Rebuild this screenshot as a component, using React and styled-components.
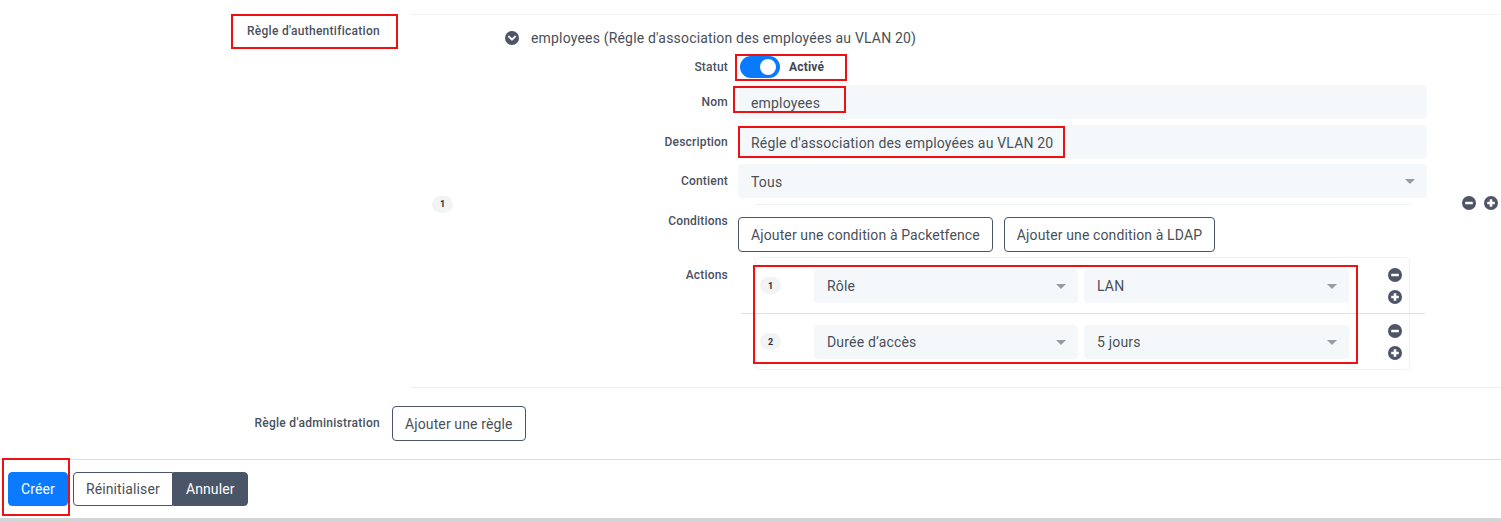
import React from "react";
import styled, { createGlobalStyle } from "styled-components";

const GlobalStyle = createGlobalStyle`
  html, body { margin: 0; padding: 0; background: #ffffff; }
  body { font-family: Roboto, "Noto Sans", "Liberation Sans", sans-serif; color: #495057; letter-spacing: 0.18px; }
  * { box-sizing: border-box; }
  button { letter-spacing: 0.12px; }
`;

const Page = styled.div`
  width: 1501px;
  min-height: 522px;
  padding-top: 14px;
  display: flex;
  flex-direction: column;
`;

const FormRow = styled.div`
  display: flex;
  align-items: flex-start;
  margin-top: ${(p) => p.$mt || 0}px;
`;

const LabelCol = styled.div`
  width: 392px;
  flex: none;
  text-align: right;
  padding-right: 12px;
  padding-top: 6px;
`;

const SectionLabel = styled.span`
  position: relative;
  display: inline-block;
  font-size: 12px;
  line-height: 14px;
  font-weight: 500;
  letter-spacing: 0.28px;
  color: #4a5160;
`;

const Annot = styled.span`
  position: absolute;
  top: ${(p) => p.$t}px;
  left: ${(p) => p.$l}px;
  width: ${(p) => (p.$w != null ? `${p.$w}px` : "auto")};
  height: ${(p) => (p.$h != null ? `${p.$h}px` : "auto")};
  right: ${(p) => (p.$r != null ? `${p.$r}px` : "auto")};
  bottom: ${(p) => (p.$b != null ? `${p.$b}px` : "auto")};
  border: 2px solid #ee1111;
  pointer-events: none;
  z-index: 5;
`;

const ContentCol = styled.div`
  flex: 1;
  min-width: 0;
`;

const RuleCard = styled.div`
  margin-left: 18px;
  border-top: 1px solid #f1f2f4;
  border-bottom: 1px solid #eff0f2;
  display: flex;
  align-items: center;
`;

const BadgeCell = styled.div`
  width: 80px;
  flex: none;
  padding-left: 22px;
  margin-top: 3px;
`;

const Badge = styled.span`
  display: inline-flex;
  align-items: center;
  justify-content: center;
  width: 21px;
  height: 17px;
  border-radius: 9px;
  background: #f1f3f5;
  color: #2b2f36;
  font-size: 9px;
  font-weight: 700;
  letter-spacing: 0;
`;

const RuleMain = styled.div`
  flex: 1;
  min-width: 0;
  padding: 11px 13px 17px 0;
`;

const RuleHeader = styled.div`
  display: flex;
  align-items: center;
  gap: 12px;
  height: 24px;
  padding-left: 15px;
  font-size: 14px;
  color: #495057;
`;

const Field = styled.div`
  display: grid;
  grid-template-columns: 238px 1fr;
  column-gap: 10px;
  margin-top: ${(p) => p.$mt || 0}px;
`;

const FieldLabel = styled.div`
  text-align: right;
  font-size: 12px;
  line-height: 14px;
  font-weight: 500;
  letter-spacing: 0.2px;
  color: #4a5160;
  padding-top: ${(p) => (p.$pt != null ? p.$pt : 10)}px;
`;

const FieldBody = styled.div`
  position: relative;
  min-width: 0;
`;

const SwitchRow = styled.div`
  position: relative;
  height: 26px;
  display: flex;
  align-items: center;
  gap: 9px;
  padding-left: 2px;
`;

const SwitchTrack = styled.span`
  width: 40px;
  height: 22px;
  border-radius: 11px;
  background: #0a7bff;
  position: relative;
  display: inline-block;
`;

const SwitchKnob = styled.span`
  position: absolute;
  top: 3px;
  right: 4px;
  width: 16px;
  height: 16px;
  border-radius: 50%;
  background: #ffffff;
`;

const SwitchText = styled.span`
  font-size: 12px;
  font-weight: 700;
  color: #3f4654;
`;

const Input = styled.div`
  position: relative;
  height: 34px;
  border-radius: 4px;
  background: #f5f8fb;
  display: flex;
  align-items: center;
  padding: 1px 12px 0 13px;
  font-size: 14px;
  color: #495057;
  white-space: nowrap;
`;

const SelectText = styled.span`
  flex: 1;
`;

const Caret = () => (
  <svg width="10" height="5" viewBox="0 0 10 5">
    <path d="M0 0 L10 0 L5 5 Z" fill="#9b9b9b" />
  </svg>
);

const Select = ({ children }) => (
  <Input>
    <SelectText>{children}</SelectText>
    <Caret />
  </Input>
);

const EmptyList = styled.div`
  margin: 0 17px;
  border-top: 1px solid #eef1f5;
`;

const ButtonBar = styled.div`
  display: flex;
  gap: 11px;
  margin-top: 12px;
`;

const OutlineButton = styled.button`
  height: 35px;
  padding: 0 12px;
  border: 1px solid #4a5568;
  border-radius: ${(p) => p.$radius || "4px"};
  background: #ffffff;
  color: #495057;
  font-family: inherit;
  font-size: 14px;
  cursor: pointer;
  white-space: nowrap;
`;

const ActionsCard = styled.div`
  position: relative;
  margin: 0 17px;
  border: 1px solid #eff1f4;
  border-radius: 4px;
`;

const ActionRow = styled.div`
  height: 55px;
  display: flex;
  align-items: center;
  padding-left: 4px;
`;

const RowDivider = styled.div`
  height: 1px;
  background: #dde0e5;
  margin: 0 -16px 0 -15px;
`;

const ActionBadgeCell = styled.div`
  width: 54px;
  flex: none;
  display: flex;
  align-items: center;
`;

const SelectPair = styled.div`
  flex: 1;
  display: grid;
  grid-template-columns: 264fr 265fr;
  gap: 6px;
`;

const IconStack = styled.div`
  width: 60px;
  flex: none;
  display: flex;
  flex-direction: column;
  align-items: flex-end;
  gap: 8px;
  padding-right: 7px;
`;

const IconRow = styled.div`
  width: 61px;
  flex: none;
  display: flex;
  gap: 8px;
  padding-left: 22px;
  margin-top: 3px;
`;

const IconBtn = styled.span`
  display: inline-flex;
  width: 14px;
  height: 14px;
`;

const ICON = "#4d5567";

const MinusCircle = () => (
  <IconBtn>
    <svg width="14" height="14" viewBox="0 0 14 14">
      <circle cx="7" cy="7" r="7" fill={ICON} />
      <rect x="3.2" y="5.7" width="7.6" height="2.6" rx="0.4" fill="#fff" />
    </svg>
  </IconBtn>
);

const PlusCircle = () => (
  <IconBtn>
    <svg width="14" height="14" viewBox="0 0 14 14">
      <circle cx="7" cy="7" r="7" fill={ICON} />
      <rect x="3.2" y="5.7" width="7.6" height="2.6" rx="0.4" fill="#fff" />
      <rect x="5.7" y="3.2" width="2.6" height="7.6" rx="0.4" fill="#fff" />
    </svg>
  </IconBtn>
);

const ChevronCircle = () => (
  <IconBtn>
    <svg width="14" height="14" viewBox="0 0 14 14">
      <circle cx="7" cy="7" r="7" fill={ICON} />
      <path d="M3.9 5.6 L7 8.6 L10.1 5.6" stroke="#fff" strokeWidth="2" fill="none" strokeLinecap="round" strokeLinejoin="round" />
    </svg>
  </IconBtn>
);

const Footer = styled.div`
  position: relative;
  margin-top: 18px;
  border-top: 1px solid #dcdcdc;
  padding: 12px 8px 12px;
  display: flex;
  gap: 5px;
`;

const PrimaryButton = styled.button`
  height: 34px;
  padding: 0 12px;
  border: 1px solid #0a7bff;
  border-radius: 4px;
  background: #0a7bff;
  color: #ffffff;
  font-family: inherit;
  font-size: 14px;
`;

const ButtonGroup = styled.div`
  display: flex;
`;

const DarkButton = styled.button`
  height: 34px;
  padding: 0 12px;
  border: 1px solid #4a5568;
  border-radius: 0 4px 4px 0;
  background: #4a5568;
  color: #ffffff;
  font-family: inherit;
  font-size: 14px;
`;

const GroupOutline = styled(OutlineButton)`
  height: 34px;
`;

const BottomBand = styled.div`
  height: 4px;
  background: #d2d6d9;
`;

const actions = [
  { n: 1, type: "Rôle", value: "LAN" },
  { n: 2, type: "Durée d’accès", value: "5 jours" },
];

export default function App() {
  return (
    <>
      <GlobalStyle />
      <Page>
        <FormRow>
          <LabelCol>
            <SectionLabel>
              Règle d'authentification
              <Annot $t={-10} $l={-16} $r={-18} $b={-11} />
            </SectionLabel>
          </LabelCol>
          <ContentCol>
            <RuleCard>
              <BadgeCell>
                <Badge>1</Badge>
              </BadgeCell>
              <RuleMain>
                <RuleHeader>
                  <ChevronCircle />
                  <span>employees (Régle d'association des employées au VLAN 20)</span>
                </RuleHeader>

                <Field $mt={4}>
                  <FieldLabel $pt={6}>Statut</FieldLabel>
                  <FieldBody>
                    <SwitchRow>
                      <SwitchTrack>
                        <SwitchKnob />
                      </SwitchTrack>
                      <SwitchText>Activé</SwitchText>
                      <Annot $t={0} $l={-3} $w={112} $h={27} />
                    </SwitchRow>
                  </FieldBody>
                </Field>

                <Field $mt={5}>
                  <FieldLabel>Nom</FieldLabel>
                  <FieldBody>
                    <Input>employees</Input>
                    <Annot $t={1} $l={-5} $w={113} $h={27} />
                  </FieldBody>
                </Field>

                <Field $mt={6}>
                  <FieldLabel>Description</FieldLabel>
                  <FieldBody>
                    <Input>Régle d'association des employées au VLAN 20</Input>
                    <Annot $t={1} $l={0} $w={327} $h={32} />
                  </FieldBody>
                </Field>

                <Field $mt={5}>
                  <FieldLabel>Contient</FieldLabel>
                  <FieldBody>
                    <Select>Tous</Select>
                  </FieldBody>
                </Field>

                <Field $mt={6}>
                  <FieldLabel $pt={10}>Conditions</FieldLabel>
                  <FieldBody>
                    <EmptyList />
                    <ButtonBar>
                      <OutlineButton>Ajouter une condition à Packetfence</OutlineButton>
                      <OutlineButton>Ajouter une condition à LDAP</OutlineButton>
                    </ButtonBar>
                  </FieldBody>
                </Field>

                <Field $mt={5}>
                  <FieldLabel $pt={11}>Actions</FieldLabel>
                  <FieldBody>
                    <ActionsCard>
                      {actions.map((a, i) => (
                        <React.Fragment key={a.n}>
                          {i > 0 && <RowDivider />}
                          <ActionRow>
                            <ActionBadgeCell>
                              <Badge>{a.n}</Badge>
                            </ActionBadgeCell>
                            <SelectPair>
                              <Select>{a.type}</Select>
                              <Select>{a.value}</Select>
                            </SelectPair>
                            <IconStack>
                              <MinusCircle />
                              <PlusCircle />
                            </IconStack>
                          </ActionRow>
                        </React.Fragment>
                      ))}
                      <Annot $t={7} $l={-3} $w={605} $h={99} />
                    </ActionsCard>
                  </FieldBody>
                </Field>
              </RuleMain>
              <IconRow>
                <MinusCircle />
                <PlusCircle />
              </IconRow>
            </RuleCard>
          </ContentCol>
        </FormRow>

        <FormRow $mt={18}>
          <LabelCol>
            <SectionLabel>Règle d'administration</SectionLabel>
          </LabelCol>
          <ContentCol>
            <OutlineButton>Ajouter une règle</OutlineButton>
          </ContentCol>
        </FormRow>

        <Footer>
          <PrimaryButton>Créer</PrimaryButton>
          <ButtonGroup>
            <GroupOutline $radius="4px 0 0 4px">Réinitialiser</GroupOutline>
            <DarkButton>Annuler</DarkButton>
          </ButtonGroup>
          <Annot $t={-2} $l={2} $w={68} $h={58} />
        </Footer>
        <BottomBand />
      </Page>
    </>
  );
}
